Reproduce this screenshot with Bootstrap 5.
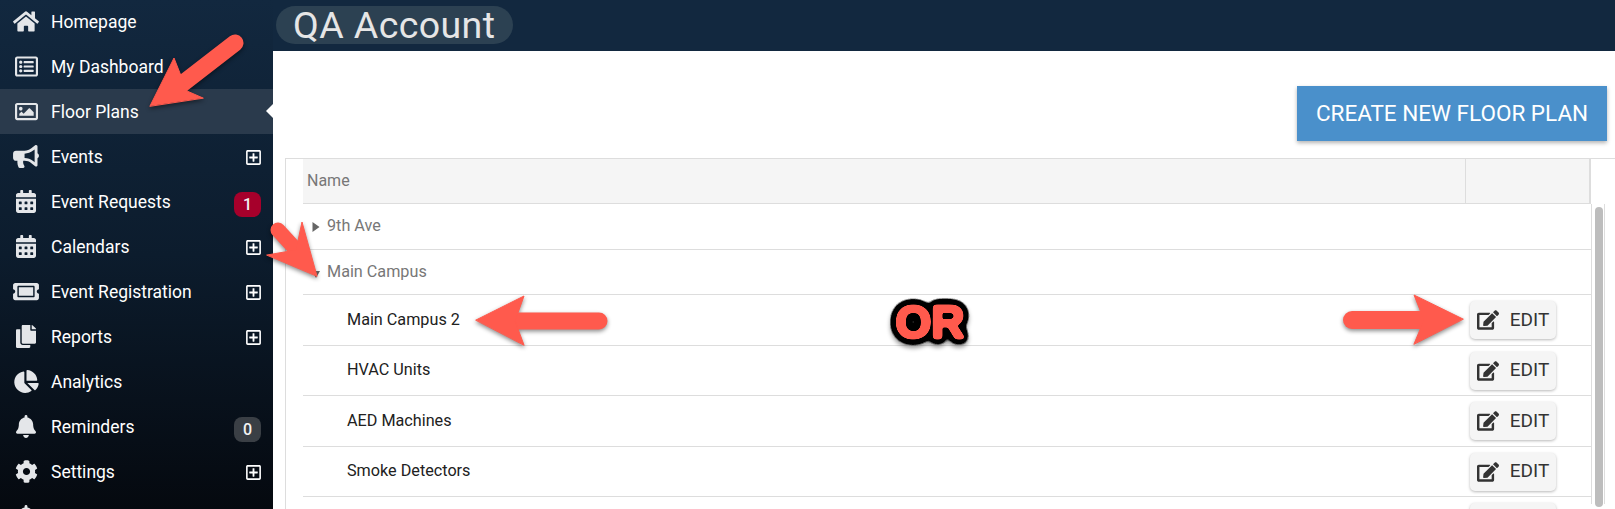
<!DOCTYPE html>
<html lang="en">
<head>
<meta charset="utf-8">
<title>QA Account</title>
<link href="https://cdn.jsdelivr.net/npm/bootstrap@5.3.0/dist/css/bootstrap.min.css" rel="stylesheet">
<style>
html,body{height:509px;overflow:hidden;background:#fff;}
body{font-family:Roboto,"Liberation Sans",sans-serif;position:relative;}
.ico{fill:currentColor;display:block;}
.side-pane{width:273px;height:509px;flex:none;background:linear-gradient(180deg,#12283f 0%,#0c1c2d 50%,#05090f 100%);overflow:hidden;}
.side-list{margin-top:-1px;}
.side-item{height:45px;color:#fff;font-size:17.5px;text-decoration:none;position:relative;flex:none;}
.side-item:hover{color:#fff;}
.side-item.is-active{background:#2a3a4c;}
.side-item.is-active::after{content:"";position:absolute;right:0;top:15px;border:7px solid transparent;border-right-color:#fff;border-left-width:0;}
.side-icon{width:52px;flex:none;color:#e4e6e9;display:flex;justify-content:center;height:23px;margin-right:-1px;}
.side-icon svg{height:23px;}
.side-text{flex-grow:1;padding-top:2px;}
.side-plus{width:15px;height:17px;color:#fff;margin:2px 12px 0 0;}
.side-count{width:27px;height:25px;border-radius:8px;margin:6px 12px 0 0;font-size:16px;font-weight:500;color:#f2f2f2;line-height:25px;text-align:center;}
.count-red{background:#a6002b;}
.count-grey{background:#3a3f45;}
.top-band{height:51px;background:#12283f;padding:6px 0 0 3px;flex:none;}
.title-pill{width:237px;height:38px;background:#2c4152;border-radius:19px;color:#e6e6e6;font-size:37.5px;line-height:38px;padding-left:17px;letter-spacing:.4px;white-space:nowrap;}
.action-band{height:107px;flex:none;padding:35px 8px 0 0;}
.create-btn{width:310px;height:55px;background:#4a90cb;color:#fff;border:0;border-radius:0;font-size:22.5px;padding:0;box-shadow:0 2px 4px rgba(0,0,0,.3);}
.create-btn:hover{background:#4a90cb;color:#fff;}
.grid-wrap{margin-left:12px;border-top:1px solid #ddd;border-left:1px solid #ddd;}
.grid-head{margin-left:17px;width:1288px;height:45px;background:#f5f5f5;border-bottom:1px solid #ddd;border-right:2px solid #ddd;color:#777;font-size:16px;}
.grid-head .head-name{padding-left:4px;line-height:44px;flex:1;}
.grid-head .head-act{width:124px;border-left:1px solid #ddd;}
.grid-table{table-layout:fixed;width:1288px;margin:0 0 0 17px;flex:none;border-collapse:separate;border-spacing:0;}
.grid-table td{border-bottom:1px solid #ddd;padding:0;vertical-align:middle;font-size:16.2px;background:transparent;}
.row-a td{height:46px;}
.row-b td{height:45px;}
.row-c td{height:51px;color:#212121;}
.row-d td{height:50px;color:#212121;}
.group-label{color:#777;padding-left:9px !important;}
.tri{display:inline-block;width:8px;margin-right:7px;vertical-align:-1px;}
.leaf-label{padding-left:44px !important;}
.col-act{width:126px;}
.edit-btn{width:86px;height:38px;margin-left:5px;background:#f5f5f5;border:0;border-radius:5px;box-shadow:0 1px 3px rgba(0,0,0,.28);color:#333;font-size:19px;padding:0;gap:11px;}
.edit-btn svg{width:22px;height:20px;}
.scroll-col{width:14px;height:300px;border-left:1px solid #ddd;border-right:1px solid #ddd;padding:3px 1px 0 3px;flex:none;}
.scroll-thumb{height:300px;background:#bdbdbd;border-radius:4px;}
.markup-layer{position:absolute;left:0;top:0;width:1615px;height:509px;pointer-events:none;}
.mk-arrows{fill:#ff5a4d;stroke:#ff5a4d;filter:drop-shadow(0 2px 2px rgba(0,0,0,.45));}
.mk-or{font-family:"Liberation Sans",sans-serif;font-weight:700;font-size:46px;fill:#ff5a4d;filter:url(#orGlow);}
</style>
</head>
<body class="d-flex">
<svg width="0" height="0" class="position-absolute">
<defs>
<symbol id="i-home" viewBox="0 0 576 512"><path d="M280.37 148.26L96 300.11V464a16 16 0 0 0 16 16l112.06-.29a16 16 0 0 0 15.92-16V368a16 16 0 0 1 16-16h64a16 16 0 0 1 16 16v95.64a16 16 0 0 0 16 16.05L464 480a16 16 0 0 0 16-16V300L295.67 148.26a12.19 12.19 0 0 0-15.3 0zM571.6 251.47L488 182.56V44.05a12 12 0 0 0-12-12h-56a12 12 0 0 0-12 12v72.61L318.47 43a48 48 0 0 0-61 0L4.34 251.47a12 12 0 0 0-1.6 16.9l25.5 31A12 12 0 0 0 45.15 301l235.22-193.74a12.19 12.19 0 0 1 15.3 0L530.9 301a12 12 0 0 0 16.9-1.6l25.5-31a12 12 0 0 0-1.7-16.93z"/></symbol>
<symbol id="i-list" viewBox="0 0 512 512"><path d="M464 32H48C21.49 32 0 53.49 0 80v352c0 26.51 21.49 48 48 48h416c26.51 0 48-21.49 48-48V80c0-26.51-21.49-48-48-48zm-6 400H54a6 6 0 0 1-6-6V86a6 6 0 0 1 6-6h404a6 6 0 0 1 6 6v340a6 6 0 0 1-6 6zm-42-92v24c0 6.627-5.373 12-12 12H204c-6.627 0-12-5.373-12-12v-24c0-6.627 5.373-12 12-12h200c6.627 0 12 5.373 12 12zm0-96v24c0 6.627-5.373 12-12 12H204c-6.627 0-12-5.373-12-12v-24c0-6.627 5.373-12 12-12h200c6.627 0 12 5.373 12 12zm0-96v24c0 6.627-5.373 12-12 12H204c-6.627 0-12-5.373-12-12v-24c0-6.627 5.373-12 12-12h200c6.627 0 12 5.373 12 12zm-252 12c0 19.882-16.118 36-36 36s-36-16.118-36-36 16.118-36 36-36 36 16.118 36 36zm0 96c0 19.882-16.118 36-36 36s-36-16.118-36-36 16.118-36 36-36 36 16.118 36 36zm0 96c0 19.882-16.118 36-36 36s-36-16.118-36-36 16.118-36 36-36 36 16.118 36 36z"/></symbol>
<symbol id="i-image" viewBox="0 0 512 512"><path d="M464 64H48C21.49 64 0 85.49 0 112v288c0 26.51 21.49 48 48 48h416c26.51 0 48-21.49 48-48V112c0-26.51-21.49-48-48-48zm-6 336H54a6 6 0 0 1-6-6V118a6 6 0 0 1 6-6h404a6 6 0 0 1 6 6v276a6 6 0 0 1-6 6zM128 152c-22.091 0-40 17.909-40 40s17.909 40 40 40 40-17.909 40-40-17.909-40-40-40zM96 352h320v-80l-87.515-87.515c-4.686-4.686-12.284-4.686-16.971 0L192 304l-39.515-39.515c-4.686-4.686-12.284-4.686-16.971 0L96 304v48z"/></symbol>
<symbol id="i-horn" viewBox="0 0 576 512"><path d="M576 240c0-23.63-12.95-44.04-32-55.12V32.01C544 23.26 537.02 0 512 0c-7.12 0-14.19 2.38-19.98 7.02l-85.03 68.03C364.28 109.19 310.66 128 256 128H64c-35.35 0-64 28.65-64 64v96c0 35.35 28.65 64 64 64h33.7c-1.39 10.48-2.18 21.14-2.18 32 0 39.77 9.26 77.35 25.56 110.94 5.19 10.69 16.52 17.06 28.4 17.06h74.28c26.05 0 41.69-29.84 25.9-50.56-16.4-21.52-26.15-48.36-26.15-77.44 0-11.11 1.62-21.79 4.41-32H256c54.66 0 108.28 18.81 150.98 52.95l85.03 68.03a32.023 32.023 0 0 0 19.98 7.02c24.92 0 32-22.78 32-32V295.13C563.05 284.04 576 263.63 576 240zm-96 141.42l-33.05-26.44C392.95 311.78 325.12 288 256 288v-96c69.12 0 136.95-23.78 190.95-66.98L480 98.58v282.84z"/></symbol>
<symbol id="i-cal" viewBox="0 0 448 512"><path d="M0 464c0 26.5 21.5 48 48 48h352c26.5 0 48-21.5 48-48V192H0v272zm320-196c0-6.6 5.4-12 12-12h40c6.6 0 12 5.4 12 12v40c0 6.6-5.4 12-12 12h-40c-6.6 0-12-5.4-12-12v-40zm0 128c0-6.6 5.4-12 12-12h40c6.6 0 12 5.4 12 12v40c0 6.6-5.4 12-12 12h-40c-6.6 0-12-5.4-12-12v-40zM192 268c0-6.6 5.4-12 12-12h40c6.6 0 12 5.4 12 12v40c0 6.6-5.4 12-12 12h-40c-6.6 0-12-5.4-12-12v-40zm0 128c0-6.6 5.4-12 12-12h40c6.6 0 12 5.4 12 12v40c0 6.6-5.4 12-12 12h-40c-6.6 0-12-5.4-12-12v-40zM64 268c0-6.6 5.4-12 12-12h40c6.6 0 12 5.4 12 12v40c0 6.6-5.4 12-12 12H76c-6.6 0-12-5.4-12-12v-40zm0 128c0-6.6 5.4-12 12-12h40c6.6 0 12 5.4 12 12v40c0 6.6-5.4 12-12 12H76c-6.6 0-12-5.4-12-12v-40zM400 64h-48V16c0-8.8-7.2-16-16-16h-32c-8.8 0-16 7.2-16 16v48H160V16c0-8.8-7.2-16-16-16h-32c-8.8 0-16 7.2-16 16v48H48C21.5 64 0 85.5 0 112v48h448v-48c0-26.5-21.5-48-48-48z"/></symbol>
<symbol id="i-ticket" viewBox="0 0 576 512"><path d="M128 160h320v192H128V160zm400 96c0 26.51 21.49 48 48 48v96c0 26.51-21.49 48-48 48H48c-26.51 0-48-21.49-48-48v-96c26.51 0 48-21.49 48-48s-21.49-48-48-48v-96c0-26.51 21.49-48 48-48h480c26.51 0 48 21.49 48 48v96c-26.51 0-48 21.49-48 48zm-48-104c0-13.255-10.745-24-24-24H120c-13.255 0-24 10.745-24 24v208c0 13.255 10.745 24 24 24h336c13.255 0 24-10.745 24-24V152z"/></symbol>
<symbol id="i-copy" viewBox="0 0 448 512"><path d="M320 448v40c0 13.255-10.745 24-24 24H24c-13.255 0-24-10.745-24-24V120c0-13.255 10.745-24 24-24h72v296c0 30.879 25.121 56 56 56h168zm0-344V0H152c-13.255 0-24 10.745-24 24v368c0 13.255 10.745 24 24 24h272c13.255 0 24-10.745 24-24V128H344c-13.2 0-24-10.8-24-24zm120.971-31.029L375.029 7.029A24 24 0 0 0 358.059 0H352v96h96v-6.059a24 24 0 0 0-7.029-16.97z"/></symbol>
<symbol id="i-pie" viewBox="0 0 544 512"><path d="M527.79 288H290.5l158.03 158.03c6.04 6.04 15.98 6.53 22.19.68 38.7-36.46 65.32-85.61 73.13-140.86 1.34-9.46-6.51-17.85-16.06-17.85zm-15.83-64.8C503.72 103.74 408.26 8.28 288.8.04 279.68-.59 272 7.1 272 16.24V240h223.77c9.14 0 16.82-7.68 16.19-16.8zM224 288V50.71c0-9.55-8.39-17.4-17.84-16.06C86.99 51.49-4.1 155.6.14 280.37 4.5 408.51 114.83 513.59 243.03 511.98c50.4-.63 96.97-16.87 135.26-44.03 7.9-5.6 8.42-17.23 1.57-24.08L224 288z"/></symbol>
<symbol id="i-bell" viewBox="0 0 448 512"><path d="M224 512c35.32 0 63.97-28.65 63.97-64H160.03c0 35.35 28.65 64 63.97 64zm215.39-149.71c-19.32-20.76-55.47-51.99-55.47-154.29 0-77.7-54.48-139.9-127.94-155.16V32c0-17.67-14.32-32-31.98-32s-31.98 14.33-31.98 32v20.84C118.56 68.1 64.08 130.3 64.08 208c0 102.3-36.15 133.53-55.47 154.29-6 6.45-8.66 14.16-8.61 21.71.11 16.4 12.98 32 32.1 32h383.8c19.12 0 32-15.6 32.1-32 .05-7.55-2.61-15.27-8.61-21.71z"/></symbol>
<symbol id="i-cog" viewBox="0 0 512 512"><path d="M487.4 315.7l-42.6-24.6c4.3-23.2 4.3-47 0-70.2l42.6-24.6c4.9-2.8 7.1-8.6 5.5-14-11.1-35.6-30-67.8-54.7-94.6-3.8-4.1-10-5.1-14.8-2.3L380.8 110c-17.9-15.4-38.5-27.3-60.8-35.1V25.8c0-5.6-3.9-10.5-9.4-11.7-36.7-8.2-74.3-7.8-109.2 0-5.5 1.2-9.4 6.1-9.4 11.7V75c-22.2 7.9-42.8 19.8-60.8 35.1L88.7 85.5c-4.9-2.8-11-1.9-14.8 2.3-24.7 26.7-43.6 58.9-54.7 94.6-1.7 5.4.6 11.2 5.5 14L67.3 221c-4.3 23.2-4.3 47 0 70.2l-42.6 24.6c-4.9 2.8-7.1 8.6-5.5 14 11.1 35.6 30 67.8 54.7 94.6 3.8 4.1 10 5.1 14.8 2.3l42.6-24.6c17.9 15.4 38.5 27.3 60.8 35.1v49.2c0 5.6 3.9 10.5 9.4 11.7 36.7 8.2 74.3 7.8 109.2 0 5.5-1.2 9.4-6.1 9.4-11.7v-49.2c22.2-7.9 42.8-19.8 60.8-35.1l42.6 24.6c4.9 2.8 11 1.9 14.8-2.3 24.7-26.7 43.6-58.9 54.7-94.6 1.5-5.5-.7-11.3-5.6-14.1zM256 336c-44.1 0-80-35.9-80-80s35.9-80 80-80 80 35.9 80 80-35.9 80-80 80z"/></symbol>
<symbol id="i-edit" viewBox="0 0 576 512"><path d="M402.6 83.2l90.2 90.2c3.8 3.8 3.8 10 0 13.8L274.4 405.6l-92.8 10.3c-12.4 1.4-22.9-9.1-21.5-21.5l10.3-92.8L388.8 83.2c3.8-3.8 10-3.8 13.8 0zm162-22.9l-48.8-48.8c-15.2-15.2-39.9-15.2-55.2 0l-35.4 35.4c-3.8 3.8-3.8 10 0 13.8l90.2 90.2c3.8 3.8 10 3.8 13.8 0l35.4-35.4c15.2-15.3 15.2-40 0-55.2zM384 346.2V448H64V128h229.8c3.2 0 6.2-1.3 8.5-3.5l40-40c7.6-7.6 2.2-20.5-8.5-20.5H48C21.5 64 0 85.5 0 112v352c0 26.5 21.5 48 48 48h352c26.5 0 48-21.5 48-48V306.2c0-10.7-12.9-16-20.5-8.5l-40 40c-2.2 2.3-3.5 5.3-3.5 8.5z"/></symbol>
<symbol id="i-plus" viewBox="0 0 448 512"><path d="M352 240v32c0 6.6-5.4 12-12 12h-88v88c0 6.6-5.4 12-12 12h-32c-6.6 0-12-5.4-12-12v-88h-88c-6.6 0-12-5.4-12-12v-32c0-6.6 5.4-12 12-12h88v-88c0-6.6 5.4-12 12-12h32c6.6 0 12 5.4 12 12v88h88c6.6 0 12 5.4 12 12zm96-160v352c0 26.5-21.5 48-48 48H48c-26.5 0-48-21.5-48-48V80c0-26.5 21.5-48 48-48h352c26.5 0 48 21.5 48 48zm-48 346V86c0-3.3-2.7-6-6-6H54c-3.3 0-6 2.7-6 6v340c0 3.3 2.7 6 6 6h340c3.3 0 6-2.7 6-6z"/></symbol>
<filter id="orGlow" x="-40%" y="-40%" width="180%" height="190%" color-interpolation-filters="sRGB">
<feGaussianBlur in="SourceAlpha" stdDeviation="4.4"/>
<feComponentTransfer result="outer"><feFuncA type="linear" slope="30" intercept="-0.6"/></feComponentTransfer>
<feGaussianBlur in="outer" stdDeviation="2.2"/>
<feOffset dy="3" result="shb"/>
<feFlood flood-color="#000" flood-opacity=".4"/>
<feComposite in2="shb" operator="in" result="soft"/>
<feFlood flood-color="#000"/>
<feComposite in2="outer" operator="in" result="outl"/>
<feGaussianBlur in="SourceAlpha" stdDeviation="1.7"/>
<feComponentTransfer result="fatA"><feFuncA type="linear" slope="10" intercept="-1"/></feComponentTransfer>
<feFlood flood-color="#ff5a4d"/>
<feComposite in2="fatA" operator="in" result="fat"/>
<feMerge><feMergeNode in="soft"/><feMergeNode in="outl"/><feMergeNode in="fat"/></feMerge>
</filter>
</defs>
</svg>

<aside class="side-pane">
<nav class="nav flex-column flex-nowrap side-list">
<a class="side-item d-flex align-items-center" href="#"><span class="side-icon"><svg class="ico" width="26" height="23"><use href="#i-home"/></svg></span><span class="side-text">Homepage</span></a>
<a class="side-item d-flex align-items-center" href="#"><span class="side-icon"><svg class="ico" width="23" height="23"><use href="#i-list"/></svg></span><span class="side-text">My Dashboard</span></a>
<a class="side-item is-active d-flex align-items-center" href="#"><span class="side-icon"><svg class="ico" width="23" height="23"><use href="#i-image"/></svg></span><span class="side-text">Floor Plans</span></a>
<a class="side-item d-flex align-items-center" href="#"><span class="side-icon"><svg class="ico" width="26" height="23"><use href="#i-horn"/></svg></span><span class="side-text">Events</span><svg class="ico side-plus"><use href="#i-plus"/></svg></a>
<a class="side-item d-flex align-items-center" href="#"><span class="side-icon"><svg class="ico" width="20" height="23"><use href="#i-cal"/></svg></span><span class="side-text">Event Requests</span><span class="side-count count-red">1</span></a>
<a class="side-item d-flex align-items-center" href="#"><span class="side-icon"><svg class="ico" width="20" height="23"><use href="#i-cal"/></svg></span><span class="side-text">Calendars</span><svg class="ico side-plus"><use href="#i-plus"/></svg></a>
<a class="side-item d-flex align-items-center" href="#"><span class="side-icon"><svg class="ico" width="26" height="23"><use href="#i-ticket"/></svg></span><span class="side-text">Event Registration</span><svg class="ico side-plus"><use href="#i-plus"/></svg></a>
<a class="side-item d-flex align-items-center" href="#"><span class="side-icon"><svg class="ico" width="20" height="23"><use href="#i-copy"/></svg></span><span class="side-text">Reports</span><svg class="ico side-plus"><use href="#i-plus"/></svg></a>
<a class="side-item d-flex align-items-center" href="#"><span class="side-icon"><svg class="ico" width="25" height="23"><use href="#i-pie"/></svg></span><span class="side-text">Analytics</span></a>
<a class="side-item d-flex align-items-center" href="#"><span class="side-icon"><svg class="ico" width="20" height="23"><use href="#i-bell"/></svg></span><span class="side-text">Reminders</span><span class="side-count count-grey">0</span></a>
<a class="side-item d-flex align-items-center" href="#"><span class="side-icon"><svg class="ico" width="23" height="23"><use href="#i-cog"/></svg></span><span class="side-text">Settings</span><svg class="ico side-plus"><use href="#i-plus"/></svg></a>
<a class="side-item d-flex align-items-center" href="#" aria-label="More"><span class="side-icon"><svg class="ico" width="20" height="23"><use href="#i-bell"/></svg></span></a>
</nav>
</aside>

<main class="flex-grow-1 d-flex flex-column overflow-hidden">
<header class="top-band"><div class="title-pill">QA Account</div></header>
<div class="action-band d-flex justify-content-end"><button type="button" class="btn create-btn text-uppercase">Create New Floor Plan</button></div>
<div class="grid-wrap">
<div class="grid-head d-flex"><div class="head-name">Name</div><div class="head-act"></div></div>
<div class="d-flex">
<table class="grid-table">
<colgroup><col><col class="col-act"></colgroup>
<tbody>
<tr class="row-a"><td class="group-label" colspan="2"><svg class="tri" viewBox="0 0 7 10" height="10"><path d="M0 0l7 5-7 5z" fill="#666"/></svg>9th Ave</td></tr>
<tr class="row-b"><td class="group-label" colspan="2"><svg class="tri" viewBox="0 0 8 7" height="7"><path d="M0 0h8l-4 7z" fill="#666"/></svg>Main Campus</td></tr>
<tr class="row-c"><td class="leaf-label">Main Campus 2</td><td><button type="button" class="btn edit-btn d-inline-flex align-items-center justify-content-center"><svg class="ico"><use href="#i-edit"/></svg>EDIT</button></td></tr>
<tr class="row-d"><td class="leaf-label">HVAC Units</td><td><button type="button" class="btn edit-btn d-inline-flex align-items-center justify-content-center"><svg class="ico"><use href="#i-edit"/></svg>EDIT</button></td></tr>
<tr class="row-c"><td class="leaf-label">AED Machines</td><td><button type="button" class="btn edit-btn d-inline-flex align-items-center justify-content-center"><svg class="ico"><use href="#i-edit"/></svg>EDIT</button></td></tr>
<tr class="row-d"><td class="leaf-label">Smoke Detectors</td><td><button type="button" class="btn edit-btn d-inline-flex align-items-center justify-content-center"><svg class="ico"><use href="#i-edit"/></svg>EDIT</button></td></tr>
<tr class="row-c"><td class="leaf-label"></td><td><button type="button" class="btn edit-btn d-inline-flex" aria-label="Edit"></button></td></tr>
</tbody>
</table>
<div class="scroll-col"><div class="scroll-thumb"></div></div>
</div>
</div>
</main>

<svg class="markup-layer" viewBox="0 0 1615 509">
<g class="mk-arrows" stroke-linejoin="round" stroke-linecap="round">
<path d="M235 43L182 84" stroke-width="17" fill="none"/>
<path d="M150 106L174 58L187 91L203 98Z" stroke-width="1"/>
<path d="M278 230L300 254" stroke-width="15" fill="none"/>
<path d="M317 276L302 222L296 250L267 255Z" stroke-width="1"/>
<path d="M599 321H515" stroke-width="17" fill="none"/>
<path d="M476 320L524 296L515 321L524 345Z" stroke-width="1"/>
<path d="M1352 320H1425" stroke-width="18" fill="none"/>
<path d="M1463 319L1414 295L1424 320L1414 344Z" stroke-width="1"/>
</g>
<text class="mk-or" x="930" y="338" text-anchor="middle">OR</text>
</svg>
<script src="https://cdn.jsdelivr.net/npm/bootstrap@5.3.0/dist/js/bootstrap.bundle.min.js"></script>
</body>
</html>
